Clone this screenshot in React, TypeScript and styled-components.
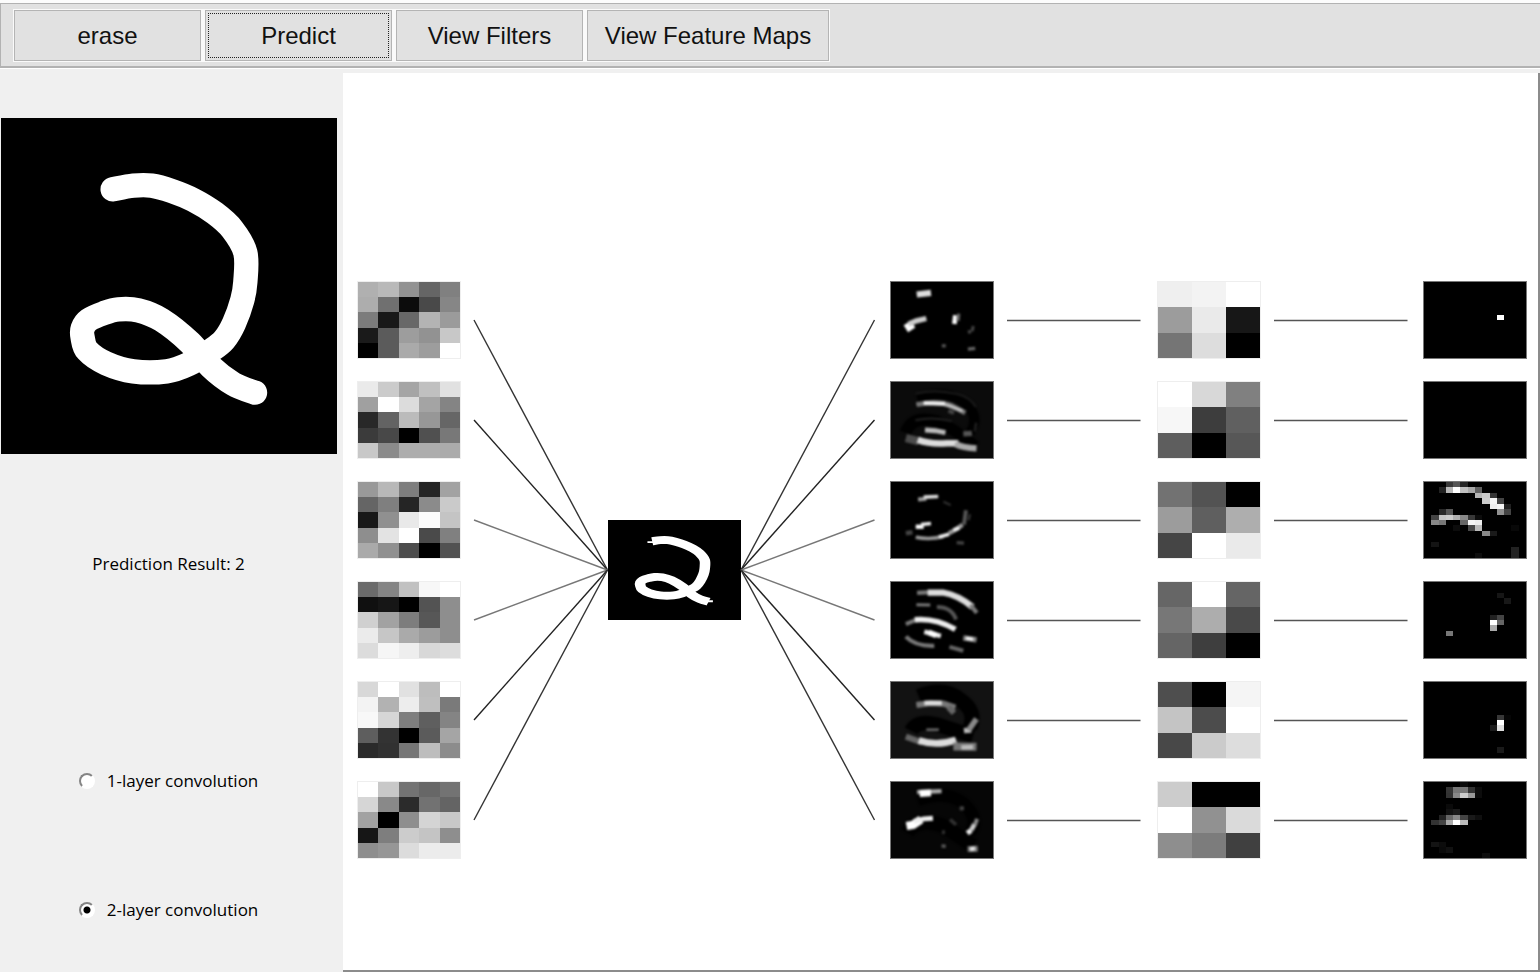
import React, { useState } from "react";
import styled, { createGlobalStyle } from "styled-components";

const GlobalStyle = createGlobalStyle`
  * { box-sizing: border-box; }
  body { margin: 0; background: #f0f0f0; color: #000; }
`;

const Page = styled.div`
  display: flex;
  flex-direction: column;
  min-height: 100vh;
`;

const Toolbar = styled.header`
  border-top: 3px solid #fcfcfc;
  border-bottom: 1px solid #fff;
`;

const ToolbarFrame = styled.div`
  display: flex;
  padding: 5px 12px 4px;
  background: #e1e1e1;
  border: 1px solid #b2b2b2;
  border-right: 0;
  border-bottom-width: 2px;
`;

const ButtonGroup = styled.div`
  display: flex;
  gap: 4px;
  padding: 1px;
  background: #fafafa;
`;

const ToolButton = styled.button<{ $wide?: boolean }>`
  width: ${(p) => (p.$wide ? 242 : 187)}px;
  height: 51px;
  padding: 2px;
  border: 1px solid #b4b4b4;
  border-radius: 0;
  background: #e1e1e1;
  color: #111;
  font: 24px/28px "Liberation Sans", Arial, sans-serif;
`;

const ButtonFace = styled.span<{ $focused?: boolean }>`
  display: flex;
  height: 100%;
  align-items: center;
  justify-content: center;
  border: 1px dotted ${(p) => (p.$focused ? "#222" : "transparent")};
`;

const Workspace = styled.div`
  display: flex;
  flex: 1;
  padding-top: 4px;
`;

const Sidebar = styled.aside`
  display: flex;
  flex: 0 0 343px;
  flex-direction: column;
  align-items: center;
  padding: 45px 6px 0 0;
  font: 17px/24px "Open Sans", "Noto Sans", sans-serif;
`;

const DrawingPad = styled.svg`
  width: 336px;
  height: 336px;
  background: #000;
`;

const Result = styled.p`
  margin: 98px 0 193px;
`;

const LayerOptions = styled.fieldset`
  display: flex;
  flex-direction: column;
  gap: 105px;
  margin: 0;
  padding: 0;
  border: 0;
`;

const LayerOption = styled.label`
  display: flex;
  align-items: center;
  gap: 12px;
`;

const Radio = styled.input`
  appearance: none;
  width: 16px;
  height: 16px;
  margin: 0;
  border: 2px solid;
  border-color: #858585 #fff #fff #858585;
  border-radius: 50%;
  background: #fff;
  &:checked {
    background: radial-gradient(circle, #000 0 3px, #fff 4px);
  }
`;

const Canvas = styled.main`
  display: flex;
  flex: 1;
  min-width: 0;
  align-items: flex-start;
  padding: 208px 11px 0 14px;
  background: #fff;
  border: solid #8c8c8c;
  border-width: 0 2px 2px 0;
`;

const Network = styled.div`
  display: flex;
  flex: 1;
  min-width: 0;
  align-items: center;
`;

const Column = styled.div`
  display: flex;
  flex: 0 0 104px;
  flex-direction: column;
  gap: 22px;
`;

const Tile = styled.svg<{ $dark?: boolean }>`
  display: block;
  width: 104px;
  height: 78px;
  border: 1px solid ${(p) => (p.$dark ? "#777" : "#eee")};
  background: ${(p) => (p.$dark ? "#000" : "#fff")};
`;

const InputImage = styled.svg`
  flex: 0 0 133px;
  height: 100px;
  background: #000;
`;

const Links = styled.svg<{ $before: number; $after: number }>`
  flex: 1 1 0;
  min-width: 0;
  height: 578px;
  margin: 0 ${(p) => p.$after}px 0 ${(p) => p.$before}px;
  overflow: visible;
`;

const DIGIT_POINTS = [
  [338, 238], [400, 227], [455, 227], [515, 243], [580, 270], [645, 310],
  [697, 358], [736, 428], [736, 516], [727, 570], [702, 640], [672, 690],
  [632, 722], [565, 763], [500, 784], [400, 784], [318, 760], [262, 722],
  [248, 683], [248, 655], [266, 630], [310, 610], [355, 598], [415, 601],
  [485, 630], [570, 698], [632, 770], [700, 822], [765, 848],
];

/* Catmull-Rom spline through the sampled pen positions */
const spline = (points: number[][]) => {
  let d = `M${points[0].join(" ")}`;
  for (let i = 0; i < points.length - 1; i++) {
    const a = points[i - 1] ?? points[i];
    const b = points[i];
    const c = points[i + 1];
    const e = points[i + 2] ?? c;
    d += `C${b[0] + (c[0] - a[0]) / 6} ${b[1] + (c[1] - a[1]) / 6} ${
      c[0] - (e[0] - b[0]) / 6
    } ${c[1] - (e[1] - b[1]) / 6} ${c[0]} ${c[1]}`;
  }
  return d;
};

const DIGIT = spline(DIGIT_POINTS);

const Digit = ({ cap = "round", width = 73 }: { cap?: "round" | "butt"; width?: number }) => (
  <path
    d={DIGIT}
    fill="none"
    stroke="#fff"
    strokeWidth={width}
    strokeLinecap={cap}
    strokeLinejoin="round"
  />
);

/* Kernel weights, one two-digit hex grey per cell */
const KERNELS_5 = [
  "b0 b9 92 65 80 ad 70 0c 49 86 7c 18 68 b3 9b 1a 5b 9d 92 c8 00 5b aa 9d ff",
  "ea cb a5 c0 e1 a0 ff dc a4 84 28 63 bb 97 66 3b 48 00 50 78 c8 8b ad ad ab",
  "99 b8 7e 24 a2 65 7f 25 8b ca 18 90 e9 fc c4 8e e3 ff 4a 80 aa 90 4d 00 52",
  "6b 85 c1 f7 ff 10 16 00 53 8e d0 a2 7d 57 8e eb c6 aa 9c 8e dc f6 ee d8 dd",
  "d8 ff e1 bd ff f3 b2 ed bf 7a f8 d6 7e 5f 84 5e 33 00 5b a5 2a 31 76 bd 8c",
  "ff c8 73 67 73 d6 89 2b 72 64 a2 00 8e d4 c8 16 7e cc c4 8e 8e 96 dc ec ec",
];
const KERNELS_3 = [
  "ef f3 ff 9c ea 17 75 dd 00",
  "ff d8 80 f7 3d 60 5e 00 57",
  "72 53 00 9c 5f ae 45 ff ea",
  "66 ff 65 77 ad 49 65 3e 00",
  "4e 00 f5 c4 4c ff 48 cb dd",
  "cc 00 00 ff 91 da 8e 7c 40",
];

const Kernel = ({ cells, size }: { cells: string; size: number }) => (
  <Tile viewBox={`0 0 ${size} ${size}`} preserveAspectRatio="none">
    {cells.split(" ").map((v, i) => (
      <rect
        key={i}
        x={i % size}
        y={Math.floor(i / size)}
        width={1}
        height={1}
        fill={`#${v}${v}${v}`}
        shapeRendering="crispEdges"
      />
    ))}
  </Tile>
);

/* Pooled activations on a 14 x 14 grid: column, row, grey */
const POOLED = [
  "10,6,ff",
  "",
  "3,0,38 4,0,55 5,0,25 2,1,22 3,1,b8 4,1,ff 5,1,c0 6,1,a8 7,1,60 7,2,b5 8,2,c8 9,2,35 8,3,cc 9,3,f5 10,3,44 9,4,ee 10,4,f5 11,4,20 2,5,28 3,5,55 10,5,90 11,5,44 1,6,44 2,6,c5 3,6,cc 4,6,b0 5,6,88 6,6,38 7,6,0c 1,7,88 2,7,77 5,7,66 6,7,f5 7,7,ee 4,8,0c 6,8,48 7,8,bb 12,8,08 8,9,88 9,9,1a 1,11,14 12,12,22 7,13,0d 12,13,22",
  "10,2,16 11,3,18 9,6,22 10,6,44 9,7,ff 10,7,66 9,8,aa 3,9,77",
  "10,6,38 11,6,06 10,7,ff 9,8,1a 10,8,dd 10,12,1a",
  "5,0,0a 3,1,35 4,1,77 5,1,77 6,1,33 7,1,0c 3,2,33 4,2,88 5,2,cc 6,2,99 7,2,0c 3,4,0a 3,5,11 4,5,1a 2,6,22 3,6,66 4,6,88 5,6,44 6,6,1a 7,6,0f 1,7,33 2,7,44 3,7,aa 4,7,ff 5,7,bb 1,11,14 2,11,0c 2,12,0a 3,12,11 8,13,0d",
];

const PooledMap = ({ cells }: { cells: string }) => (
  <Tile $dark viewBox="0 0 14 14" preserveAspectRatio="none">
    {cells
      .split(" ")
      .filter(Boolean)
      .map((cell) => {
        const [x, y, v] = cell.split(",");
        return (
          <rect
            key={cell}
            x={x}
            y={y}
            width={1}
            height={1}
            fill={`#${v}${v}${v}`}
            shapeRendering="crispEdges"
          />
        );
      })}
  </Tile>
);

/* Edge responses of the first layer: path, stroke width, grey */
type Mark = [string, number, string];
const RESPONSES: { top: number; base: string; marks: Mark[] }[] = [
  {
    top: 36,
    base: "#000",
    marks: [
      ["M109 74L152 69", 19, "#ddd"],
      ["M76 178L98 164", 25, "#fff"],
      ["M84 164L108 154L138 147", 16, "#ccc"],
      ["M223 164L226 137", 14, "#fff"],
      ["M234 154L236 132", 10, "#666"],
      ["M264 188L274 187", 10, "#444"],
      ["M277 186L280 170", 9, "#444"],
      ["M185 230L197 230", 10, "#555"],
      ["M264 240L286 238", 10, "#666"],
    ],
  },
  {
    top: 336,
    base: "#0b0b0b",
    marks: [
      ["M110 385Q190 355 250 395Q305 440 270 490", 30, "#000"],
      ["M75 490Q95 435 170 455Q225 478 285 532", 36, "#000"],
      ["M105 372Q160 356 230 372Q270 382 288 412", 6, "#1c1c1c"],
      ["M108 405Q170 392 215 408L256 430", 15, "#777"],
      ["M130 400L195 402", 12, "#eee"],
      ["M195 404L248 424", 10, "#bbb"],
      ["M205 424L222 430", 12, "#444"],
      ["M105 452Q160 440 215 455", 6, "#222"],
      ["M134 482L165 484L196 490", 15, "#bbb"],
      ["M76 506L115 516", 25, "#4c4c4c"],
      ["M112 512Q150 526 200 522L235 522", 20, "#ddd"],
      ["M225 524Q250 536 290 538", 19, "#aaa"],
      ["M250 494L276 492", 16, "#555"],
      ["M285 486L289 460", 7, "#222"],
    ],
  },
  {
    top: 636,
    base: "#000",
    marks: [
      ["M113 689L138 687", 12, "#999"],
      ["M130 682L174 680", 11, "#ddd"],
      ["M190 696L212 706", 6, "#333"],
      ["M106 772L130 772", 13, "#fff"],
      ["M122 765L152 762", 11, "#eee"],
      ["M76 792L96 789", 14, "#444"],
      ["M106 804Q150 812 190 802", 11, "#999"],
      ["M176 803L207 795", 11, "#eee"],
      ["M206 792L228 780L248 766", 13, "#999"],
      ["M220 782L238 776", 11, "#eee"],
      ["M252 766L258 722", 12, "#555"],
      ["M266 752L270 734", 7, "#333"],
      ["M230 820L252 822", 10, "#444"],
    ],
  },
  {
    top: 36,
    base: "#000",
    marks: [
      ["M110 69L155 67", 13, "#777"],
      ["M142 68L188 68Q235 76 278 112", 19, "#ddd"],
      ["M272 106L291 130", 13, "#777"],
      ["M108 105L150 106", 9, "#777"],
      ["M170 112Q215 112 228 150", 12, "#555"],
      ["M76 164L105 152", 12, "#777"],
      ["M103 151Q165 145 226 180", 17, "#eee"],
      ["M132 187L182 200", 14, "#eee"],
      ["M145 189L168 198", 17, "#fff"],
      ["M76 202Q105 232 162 230", 13, "#777"],
      ["M208 233L250 245", 12, "#666"],
      ["M250 206L290 212", 16, "#888"],
      ["M258 207L280 210", 11, "#eee"],
    ],
  },
  {
    top: 336,
    base: "#121212",
    marks: [
      ["M115 380Q190 350 240 390Q292 425 270 475", 46, "#000"],
      ["M92 485Q110 450 170 465Q215 480 280 500", 44, "#000"],
      ["M108 406L150 400L190 402L226 414", 18, "#777"],
      ["M132 400L185 400", 14, "#ddd"],
      ["M205 412L222 430", 18, "#666"],
      ["M138 481L176 481", 8, "#666"],
      ["M76 502L125 520", 18, "#666"],
      ["M115 514Q170 532 228 512", 21, "#ddd"],
      ["M220 532L290 533", 24, "#777"],
      ["M244 535L280 534", 14, "#bbb"],
      ["M252 484L274 482", 16, "#bbb"],
      ["M266 482L290 448", 17, "#888"],
    ],
  },
  {
    top: 636,
    base: "#060606",
    marks: [
      ["M112 690Q200 660 250 700Q302 750 270 790", 38, "#000"],
      ["M80 790Q110 740 190 770L280 830", 44, "#000"],
      ["M110 667L184 664", 13, "#aaa"],
      ["M118 671L152 669", 21, "#fff"],
      ["M78 770L98 766L122 750", 25, "#fff"],
      ["M100 756L130 748L158 746", 15, "#eee"],
      ["M210 750L228 766", 11, "#333"],
      ["M239 716L252 716", 12, "#444"],
      ["M190 783L190 794", 9, "#333"],
      ["M184 830L197 832", 11, "#555"],
      ["M262 792L274 783", 15, "#eee"],
      ["M274 782L284 764", 14, "#ccc"],
      ["M285 767L292 748", 12, "#888"],
      ["M263 840L294 839", 18, "#777"],
      ["M270 840L286 838", 13, "#ddd"],
    ],
  },
];

const ResponseMap = ({ index }: { index: number }) => {
  const { top, base, marks } = RESPONSES[index];
  return (
    <Tile $dark viewBox={`31 ${top} 309 231`} preserveAspectRatio="none">
      <defs>
        <filter
          id={`soft${index}`}
          x="-20%"
          y="-20%"
          width="140%"
          height="140%"
          colorInterpolationFilters="sRGB"
        >
          <feGaussianBlur stdDeviation="3" />
        </filter>
      </defs>
      <rect x={31} y={top} width={309} height={231} fill={base} />
      <g filter={`url(#soft${index})`} fill="none">
        {marks.map(([d, width, stroke]) => (
          <path key={d} d={d} strokeWidth={width} stroke={stroke} />
        ))}
      </g>
    </Tile>
  );
};

const ROWS = [39, 139, 239, 339, 439, 539];
const FAN_GREYS = ["#333", "#222", "#777", "#777", "#222", "#333"];

const Fan = ({ reverse }: { reverse?: boolean }) => (
  <Links
    $before={reverse ? 0 : 13}
    $after={reverse ? 16 : 0}
    viewBox="0 0 134 578"
    preserveAspectRatio="none"
    aria-hidden="true"
  >
    {ROWS.map((y, i) => (
      <line
        key={y}
        x1={reverse ? 134 : 0}
        y1={y}
        x2={reverse ? 0 : 134}
        y2={289}
        stroke={FAN_GREYS[i]}
        strokeWidth={1.4}
      />
    ))}
  </Links>
);

const Parallel = () => (
  <Links
    $before={13}
    $after={16}
    viewBox="0 0 134 578"
    preserveAspectRatio="none"
    aria-hidden="true"
  >
    {ROWS.map((y) => (
      <line key={y} x1={0} x2={134} y1={y + 0.5} y2={y + 0.5} stroke="#555" strokeWidth={1.3} />
    ))}
  </Links>
);

export default function App() {
  const [layers, setLayers] = useState(2);
  return (
    <Page>
      <GlobalStyle />
      <Toolbar>
        <ToolbarFrame>
          <ButtonGroup>
            <ToolButton type="button">
              <ButtonFace>erase</ButtonFace>
            </ToolButton>
            <ToolButton type="button">
              <ButtonFace $focused>Predict</ButtonFace>
            </ToolButton>
            <ToolButton type="button">
              <ButtonFace>View Filters</ButtonFace>
            </ToolButton>
            <ToolButton type="button" $wide>
              <ButtonFace>View Feature Maps</ButtonFace>
            </ToolButton>
          </ButtonGroup>
        </ToolbarFrame>
      </Toolbar>
      <Workspace>
        <Sidebar>
          <DrawingPad viewBox="3 24 1008 1008" role="img" aria-label="Drawn digit">
            <Digit />
          </DrawingPad>
          <Result>Prediction Result: 2</Result>
          <LayerOptions aria-label="Network depth">
            {[1, 2].map((n) => (
              <LayerOption key={n} htmlFor={`layers-${n}`}>
                <Radio
                  id={`layers-${n}`}
                  type="radio"
                  name="layers"
                  checked={layers === n}
                  onChange={() => setLayers(n)}
                />
                {n}-layer convolution
              </LayerOption>
            ))}
          </LayerOptions>
        </Sidebar>
        <Canvas>
          <Network>
            <Column>
              {KERNELS_5.map((cells) => (
                <Kernel key={cells} cells={cells} size={5} />
              ))}
            </Column>
            <Fan />
            <InputImage viewBox="3 24 1008 1008" preserveAspectRatio="none">
              <Digit cap="butt" width={80} />
              <path d="M302 247H345M755 842H798" stroke="#fff" strokeWidth={20} />
            </InputImage>
            <Fan reverse />
            <Column>
              {RESPONSES.map((_, i) => (
                <ResponseMap key={i} index={i} />
              ))}
            </Column>
            <Parallel />
            <Column>
              {KERNELS_3.map((cells) => (
                <Kernel key={cells} cells={cells} size={3} />
              ))}
            </Column>
            <Parallel />
            <Column>
              {POOLED.map((cells, i) => (
                <PooledMap key={i} cells={cells} />
              ))}
            </Column>
          </Network>
        </Canvas>
      </Workspace>
    </Page>
  );
}
